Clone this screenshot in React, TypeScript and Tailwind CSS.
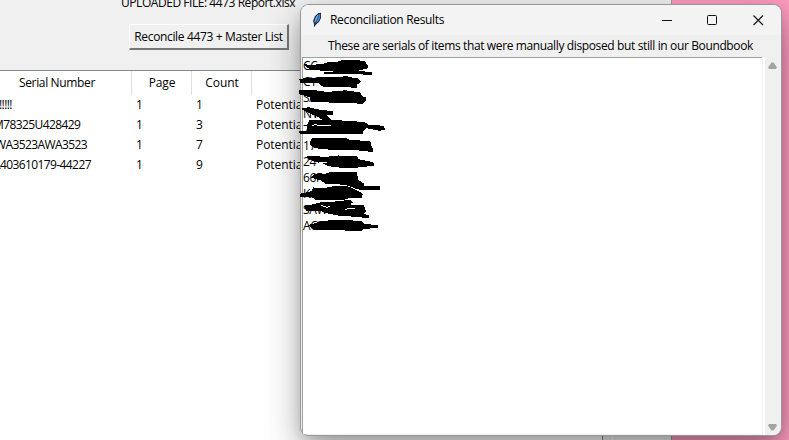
import type { ReactNode } from "react";

const rows = [
  ["!!!!!", "1", "1"],
  ["M78325U428429", "1", "3"],
  ["WA3523AWA3523", "1", "7"],
  ["A403610179-44227", "1", "9"],
];
const rowOffsets = ["-ml-[1px]", "-ml-[7px]", "-ml-[5px]", "-ml-[7px]"];

const serials = ["CC", "CY", "SA", "NV", "7", "17", "24", "66F", "KA", "SAW", "AC3"];

const strokes = [
  "M30,38 50,41 70,38 85,37 100,32 130,30 140,26 180,25 208,29 217,40 216,49 190,53 192,59 228,61 229,67 180,65 90,66 89,63 130,58 75,54 45,51Z",
  "M15,83 35,79 100,77 140,77 150,73 175,79 190,81 196,90 183,97 183,106 150,104 145,103 85,103 70,91 17,91Z",
  "M12,117 50,115 95,121 130,119 150,116 195,123 200,133 210,137 210,145 203,154 150,151 50,149 45,135 13,125Z",
  "M22,171 40,167 70,174 111,179 111,186 90,186 102,200 106,204 85,204 65,191 45,183Z",
  "M45,205 135,205 145,208 205,211 220,219 265,223 269,231 255,235 215,227 205,233 202,245 16,245 14,239 38,237 37,219Z",
  "M50,261 150,259 165,265 225,269 229,286 234,292 231,299 205,295 150,291 100,291 60,287 46,278Z",
  "M37,313 95,316 130,312 185,315 190,323 220,329 234,333 234,341 200,343 175,348 150,347 100,341 85,333 60,328 39,319Z",
  "M51,376 60,367 85,368 110,361 184,361 189,385 205,395 207,402 254,405 254,413 190,411 150,397 90,393 80,385Z",
  "M15,427 50,419 55,408 90,409 120,403 160,405 195,421 202,426 199,437 165,435 150,441 60,441 50,433 17,433Z",
  "M29,464 80,452 120,450 165,445 171,452 150,458 205,461 211,478 205,485 221,492 219,497 180,493 130,489 100,483 80,477 36,475Z",
  "M42,520 70,512 100,507 150,505 200,509 208,517 247,521 247,527 205,529 200,535 100,533 60,533Z",
];

function Label({ children, className = "" }: { children: ReactNode; className?: string }) {
  return <span className={`whitespace-pre ${className}`}>{children}</span>;
}

function Feather() {
  return (
    <svg className="h-4 w-[10px]" viewBox="0 0 10 16">
      <path d="M2 15 2 12 1 9 3 4 6.5 1 9 .8 9 6 7 10 4 12.5Z" fill="#172b43" />
      <path d="M2.2 10 3.8 5 6.2 2.3 6 7 3.2 11Z" fill="#6cabf4" />
      <path d="M6.8 2.5 8.3 1.7 8 6 6 10 4.2 11Z" fill="#4388d1" />
      <path d="M2.3 15 3.7 10 6.5 4" stroke="#203650" strokeWidth=".6" fill="none" />
    </svg>
  );
}

function ResultsDialog() {
  return (
    <section className="absolute left-[301px] top-[5px] flex h-[430px] w-[480px] flex-col rounded-lg bg-[#f0f0f0] shadow-[0_0_0_1px_#999,0_14px_34px_rgba(0,0,0,0.38),0_4px_12px_rgba(0,0,0,0.12)]">
      <header className="flex h-[30px] shrink-0 items-center rounded-t-lg bg-[#f3f3f3] pl-[11px]">
        <Feather />
        <Label className="ml-2 tracking-[-0.32px]">Reconciliation Results</Label>
        <div className="ml-auto mr-[17px] flex items-center gap-[35px]">
          <svg className="h-3 w-[11px]" viewBox="0 0 11 12"><path d="M1 6.5H11" stroke="#111" /></svg>
          <svg className="h-3 w-[11px]" viewBox="0 0 11 12"><rect x=".5" y="1.5" width="9" height="9" rx="1" fill="none" stroke="#111" /></svg>
          <svg className="h-3 w-[11px]" viewBox="0 0 11 12"><path d="M.5 1.5 10 11M10 1.5 .5 11" stroke="#111" strokeWidth="1.1" /></svg>
        </div>
      </header>
      <div className="flex h-[22px] shrink-0 items-center pl-[27px]">
        <Label className="tracking-[-0.37px]">These are serials of items that were manually disposed but still in our Boundbook</Label>
      </div>
      <div className="flex min-h-0 flex-1">
        <div className="relative mb-px ml-px w-[460px] border-l border-t border-[#a0a0a0] bg-white">
          <div className="flex flex-col text-[12px] leading-4">
            {serials.map((serial) => <Label key={serial} className="tracking-[-0.3px]">{serial}</Label>)}
          </div>
          <svg className="absolute -left-[8px] -top-[6px] h-[183px] w-[100px]" viewBox="0 0 300 549" shapeRendering="crispEdges">
            {strokes.map((path) => <path key={path} d={path} stroke="black" strokeWidth="3" />)}
            <path d="M50 220 65 218 70 222 90 219 108 219M78 460 95 466 105 463M150 472 180 468M72 330 95 333" fill="none" stroke="white" strokeWidth="3" />
          </svg>
        </div>
        <div className="ml-px flex flex-1 flex-col items-center justify-between rounded-br-lg border-l-2 border-white bg-[#f0f0f0] pb-[4px] pr-px pt-[5px]">
          <svg className="h-[7px] w-[9px]" viewBox="0 0 9 7"><path d="M3.5.5h2L9 5.5 8 7H1L0 5.5Z" fill="#a3a3a3" /></svg>
          <svg className="h-[7px] w-[9px]" viewBox="0 0 9 7"><path d="M1 0h7l1 1.5L5.5 6.5h-2L0 1.5Z" fill="#a3a3a3" /></svg>
        </div>
      </div>
    </section>
  );
}

export default function App() {
  return (
    <main className="relative h-[440px] w-[789px] overflow-hidden bg-[#fb9abe] font-['Open_Sans','Noto_Sans',sans-serif] text-[12px] leading-4 text-black">
      <div className="flex h-[440px] w-[672px] flex-col border-r border-[#999] bg-[#f0f0f0]">
        <div className="h-[70px] shrink-0">
          <div className="-mt-[5px] ml-[121px] h-[29px]">
            <Label className="tracking-[-0.45px]">UPLOADED FILE: 4473 Report.xlsx</Label>
          </div>
          <button className="ml-[129px] flex h-[26px] w-[160px] items-center justify-center border-b-2 border-r-2 border-l border-t border-b-[#777] border-l-white border-r-[#777] border-t-white bg-[#f0f0f0]">
            <Label className="tracking-[-0.35px]">Reconcile 4473 + Master List</Label>
          </button>
        </div>
        <div className="flex w-full flex-1">
          <div className="w-[603px] border-r border-t border-[#828790] bg-white">
            <div className="grid h-6 grid-cols-[132px_60px_60px_1fr] items-center text-center">
              <Label className="-ml-[18px] tracking-[-0.35px]">Serial Number</Label>
              <Label className="tracking-[-0.1px]">Page</Label>
              <Label className="tracking-[-0.1px]">Count</Label>
              <span />
            </div>
            <div className="-mt-6 grid h-6 grid-cols-[132px_60px_60px_1fr]">
              <span className="border-r border-[#dedede]" /><span className="border-r border-[#dedede]" /><span className="border-r border-[#dedede]" /><span />
            </div>
            {rows.map(([serial, page, count], index) => (
              <div key={serial} className="grid h-5 grid-cols-[136px_60px_60px_1fr] items-center">
                <Label className={`tracking-[-0.6px] ${rowOffsets[index]}`}>{serial}</Label>
                <Label>{page}</Label><Label>{count}</Label><Label className="tracking-[-0.05px]">Potential</Label>
              </div>
            ))}
          </div>
          <div className="w-[10px] border-r border-white" />
        </div>
      </div>
      <ResultsDialog />
    </main>
  );
}
